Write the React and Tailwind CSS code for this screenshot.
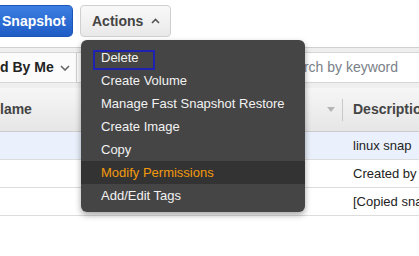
import React from 'react';

const menuItems = [
  'Delete',
  'Create Volume',
  'Manage Fast Snapshot Restore',
  'Create Image',
  'Copy',
  'Modify Permissions',
  'Add/Edit Tags',
];

const rows = ['linux snap', 'Created by', '[Copied sna'];

const App = () => {
  return (
    <div className="relative w-[419px] h-[256px] overflow-hidden bg-white font-['Liberation_Sans',Arial,sans-serif]">
      {/* top buttons */}
      <div className="flex items-start h-[47px] pt-[5px]">
        <button className="w-[73px] h-[32px] rounded-r-[5px] border border-l-0 border-[#1c55b8] bg-gradient-to-b from-[#3c7fe2] to-[#1f5cc6] text-white font-bold text-[14px] text-left pl-[2px]">
          Snapshot
        </button>
        <button className="ml-[7px] w-[91px] h-[32px] rounded-[4px] border border-[#cfcfcf] bg-gradient-to-b from-[#f9f9f9] to-[#e9e9e9] text-[#444] font-bold text-[14px] flex items-center pl-[11px] gap-[8px]">
          Actions
          <svg width="9" height="6" viewBox="0 0 9 6">
            <polyline points="1,5 4.5,1.5 8,5" fill="none" stroke="#555" strokeWidth="1.6" />
          </svg>
        </button>
      </div>

      {/* filter bar */}
      <div className="h-[41px] border-t border-[#d0d0d0] bg-[#efefef] flex items-start pt-[4px]">
        <div className="h-[31px] w-[76px] bg-[#fbfbfb] border-y border-[#d6d6d6] flex items-center text-[14px] font-bold text-[#222]">
          d By Me
          <svg className="ml-[6px]" width="10" height="6" viewBox="0 0 10 6">
            <polyline points="1,1 5,5 9,1" fill="none" stroke="#666" strokeWidth="1.6" />
          </svg>
        </div>
        <div className="w-px h-[31px] bg-[#d0d0d0]" />
        <div className="flex-1 h-[31px] bg-white border-y border-[#d6d6d6] flex items-center pl-[202px] text-[14px] text-[#7a7f88] whitespace-nowrap overflow-hidden">
          Search by keyword
        </div>
      </div>

      {/* table */}
      <div className="flex h-[44px] bg-gradient-to-b from-[#f6f6f6] to-[#e6e6e6] border-b border-[#cccccc] text-[14px] font-bold text-[#444]">
        <div className="w-[342px] flex items-center justify-between pr-[7px]">
          <span>lame</span>
          <svg width="8" height="5" viewBox="0 0 8 5">
            <polygon points="0,0 8,0 4,5" fill="#b5b5b5" />
          </svg>
        </div>
        <div className="w-px h-[22px] self-center bg-[#c8c8c8]" />
        <div className="flex-1 flex items-center pl-[10px] whitespace-nowrap overflow-hidden">Description</div>
      </div>
      {rows.map((r, i) => (
        <div
          key={r}
          className={`flex h-[28px] border-b border-[#dddddd] text-[13px] text-[#222] ${i === 0 ? 'bg-[#eaf1fc]' : 'bg-white'}`}
        >
          <div className="w-[343px]" />
          <div className="flex-1 flex items-center pl-[10px] whitespace-nowrap overflow-hidden">{r}</div>
        </div>
      ))}

      {/* actions dropdown */}
      <div className="absolute left-[81px] top-[40px] w-[224px] rounded-[6px] bg-[#454545] pt-[6px] pb-[5px] shadow-[0_3px_6px_rgba(0,0,0,0.35)] text-[13px] text-[#f2f2f2]">
        {menuItems.map((m, i) =>
          i === 0 ? (
            <div key={m} className="h-[23px] flex items-center pl-[12px]">
              <span className="w-[62px] h-[20px] mt-[4px] border-2 border-[#1f22b0] pl-[6px] flex items-center pb-[3px]">{m}</span>
            </div>
          ) : (
            <div
              key={m}
              className={`h-[23px] flex items-center pl-[20px] ${m === 'Modify Permissions' ? 'bg-[#333333] text-[#f39a0c]' : ''}`}
            >
              {m}
            </div>
          )
        )}
      </div>
    </div>
  );
};

export default App;
